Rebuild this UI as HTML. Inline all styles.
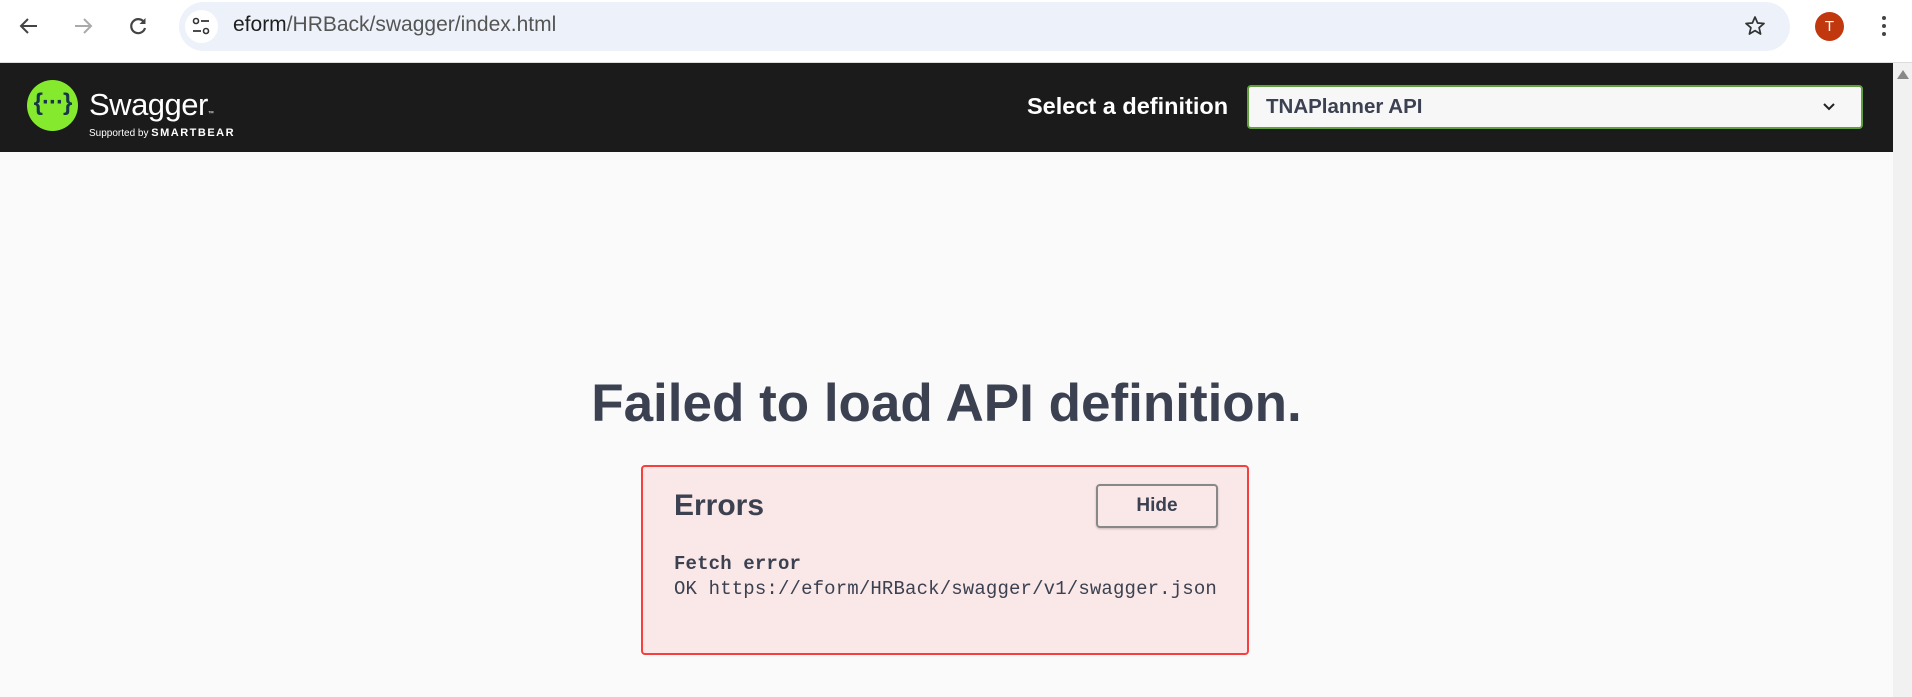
<!DOCTYPE html>
<html><head><meta charset="utf-8"><style>
*{margin:0;padding:0;box-sizing:border-box}
body{width:1912px;height:697px;overflow:hidden;background:#fafafa;font-family:"Liberation Sans",Arial,sans-serif;position:relative}
.tb{position:absolute;left:0;top:0;width:1912px;height:63px;background:#fff;border-bottom:1px solid #dcdcdc}
.addr{position:absolute;left:179px;top:2px;width:1611px;height:49px;background:#edf2fa;border-radius:25px}
.url{position:absolute;left:233px;top:13px;font-size:21px;color:#1f1f1f}
.url span{color:#555}
.hdr{position:absolute;left:0;top:63px;width:1893px;height:89px;background:#1b1b1b}
.sb{position:absolute;left:1893px;top:63px;width:19px;height:634px;background:#f1f1f1}
h1{position:absolute;left:0;width:1893px;top:373px;text-align:center;font-size:53px;font-weight:bold;color:#3b4151}
.err{position:absolute;left:641px;top:465px;width:608px;height:190px;border:2px solid #f93e3e;border-radius:4px;background:#fae7e7}
</style></head><body>
<div class="tb">
<svg style="position:absolute;left:17px;top:14px" width="24" height="24" viewBox="0 0 24 24"><path d="M20 12H5M11 5l-7 7 7 7" fill="none" stroke="#444" stroke-width="2"/></svg>
<svg style="position:absolute;left:71px;top:14px" width="24" height="24" viewBox="0 0 24 24"><path d="M4 12h15M13 5l7 7-7 7" fill="none" stroke="#aaa" stroke-width="2"/></svg>
<svg style="position:absolute;left:126px;top:14px" width="24" height="24" viewBox="0 0 24 24"><path d="M18.5 9A7 7 0 1 0 19 14" fill="none" stroke="#444" stroke-width="2.2"/><path d="M19.5 4v6h-6z" fill="#444"/></svg>
<div class="addr"></div>
<div style="position:absolute;left:185px;top:10px;width:33px;height:33px;border-radius:50%;background:#fff"></div>
<svg style="position:absolute;left:191px;top:16px" width="21" height="21" viewBox="0 0 21 21"><circle cx="5" cy="5" r="2.5" fill="none" stroke="#333" stroke-width="1.6"/><path d="M10 5h8M2 15h8" stroke="#333" stroke-width="1.8"/><circle cx="15" cy="15" r="2.5" fill="none" stroke="#333" stroke-width="1.6"/></svg>
<div class="url">eform<span>/HRBack/swagger/index.html</span></div>
<svg style="position:absolute;left:1743px;top:14px" width="24" height="24" viewBox="0 0 24 24"><path d="M12 3l2.6 6 6.4.5-4.9 4.2 1.5 6.3L12 16.6 6.4 20l1.5-6.3L3 9.5 9.4 9z" fill="none" stroke="#333" stroke-width="1.7" stroke-linejoin="round"/></svg>
<div style="position:absolute;left:1815px;top:12px;width:29px;height:29px;border-radius:50%;background:#c1380f;color:#fff;font-size:15px;text-align:center;line-height:29px">T</div>
<div style="position:absolute;left:1882px;top:16px;width:4px;height:4px;border-radius:50%;background:#444;box-shadow:0 8px 0 #444,0 16px 0 #444"></div>
</div>
<div class="hdr">
<div style="position:absolute;left:27px;top:17px;width:51px;height:51px;border-radius:50%;background:#85ea2d"></div>
<div style="position:absolute;left:27px;top:26px;width:51px;text-align:center;font-size:24px;font-weight:bold;color:#173647;letter-spacing:-1px">{···}</div>
<div style="position:absolute;left:89px;top:24px;font-size:31px;color:#fff;letter-spacing:-0.5px">Swagger<span style="font-size:6px">™</span></div>
<div style="position:absolute;left:89px;top:64px;font-size:10px;color:#fff">Supported by <b style="font-size:11px;letter-spacing:1.5px">SMARTBEAR</b></div>
<div style="position:absolute;left:1027px;top:30px;font-size:23.5px;font-weight:bold;color:#fff">Select a definition</div>
<div style="position:absolute;left:1247px;top:22px;width:616px;height:44px;border:2px solid #62a03f;border-radius:4px;background:#f7f7f7"></div>
<div style="position:absolute;left:1266px;top:32px;font-size:20.5px;font-weight:bold;color:#3b4151">TNAPlanner API</div>
<svg style="position:absolute;left:1822px;top:38px" width="14" height="12" viewBox="0 0 14 12"><path d="M2 3l5 5 5-5" fill="none" stroke="#222" stroke-width="2"/></svg>
</div>
<div class="sb"><div style="position:absolute;left:4px;top:7px;width:0;height:0;border-left:6px solid transparent;border-right:6px solid transparent;border-bottom:9px solid #888"></div></div>
<h1>Failed to load API definition.</h1>
<div class="err">
<div style="position:absolute;left:31px;top:22px;font-size:30px;font-weight:bold;color:#3b4151">Errors</div>
<div style="position:absolute;left:453px;top:17px;width:122px;height:44px;border:2px solid #888;border-radius:4px;text-align:center;line-height:40px;font-size:19px;font-weight:bold;color:#3b4151;box-shadow:0 1px 2px rgba(0,0,0,.2)">Hide</div>
<div style="position:absolute;left:31px;top:85px;font-family:'Liberation Mono',monospace;font-size:19px;letter-spacing:0.15px;line-height:25px;color:#3b4151"><b>Fetch error</b><br>OK https://eform/HRBack/swagger/v1/swagger.json</div>
</div>
</body></html>
